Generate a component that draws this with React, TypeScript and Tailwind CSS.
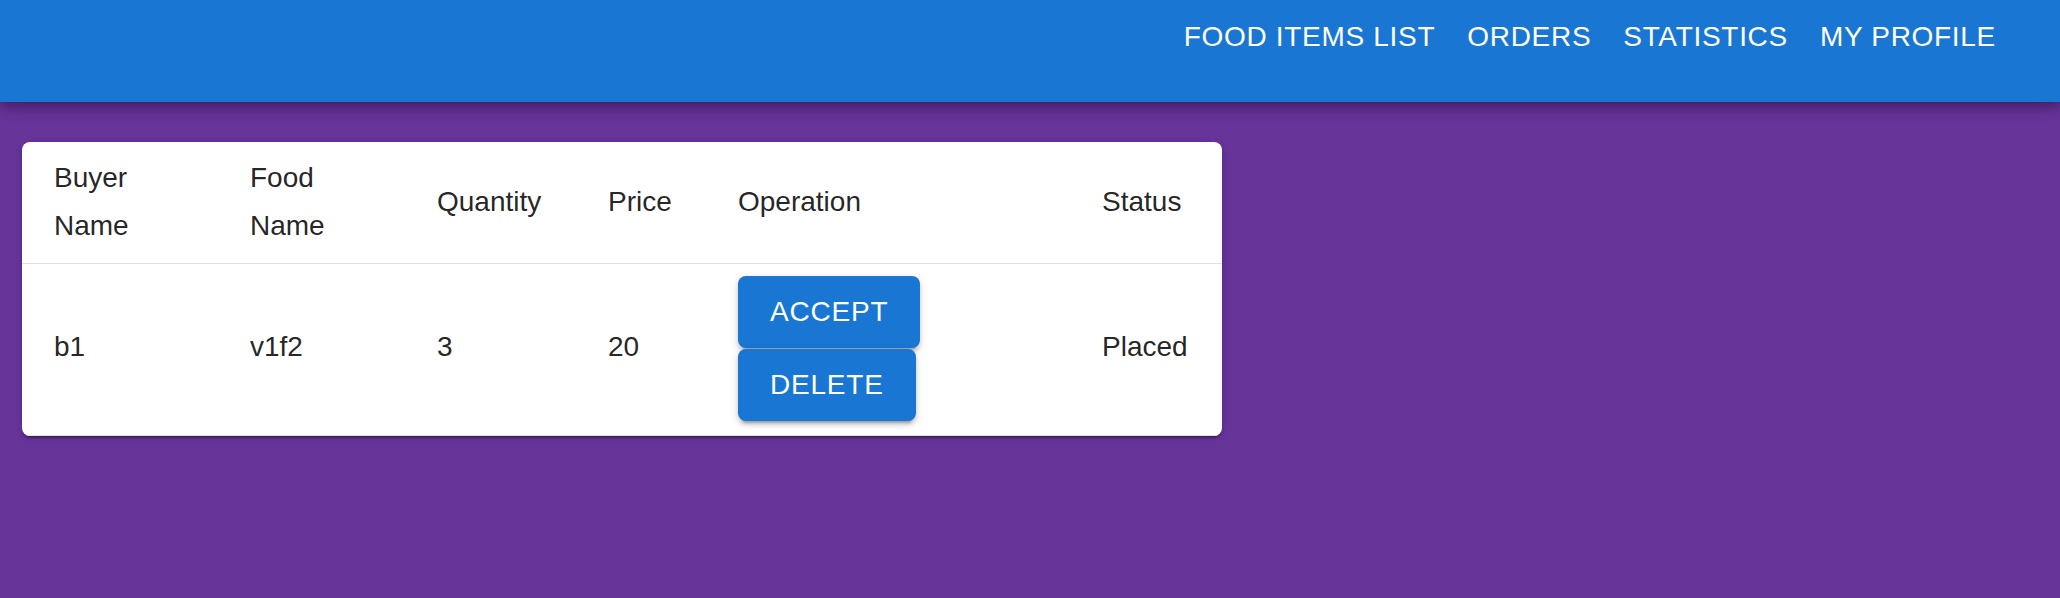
import React from "react";

const navItems = ["FOOD ITEMS LIST", "ORDERS", "STATISTICS", "MY PROFILE"];

export default function App() {
  return (
    <div className="min-h-screen w-full bg-[#663399] font-['Liberation_Sans',Arial,sans-serif]">
      <header className="relative z-10 h-[102px] w-full bg-[#1976d2] shadow-[0_4px_8px_-2px_rgba(0,0,0,0.2),0_8px_10px_0_rgba(0,0,0,0.14),0_2px_20px_0_rgba(0,0,0,0.12)]">
        <nav className="flex items-start justify-end pr-[48px]">
          {navItems.map((n) => (
            <button
              key={n}
              className="px-4 py-3 text-[28px] leading-[49px] tracking-[0.7px] text-white"
            >
              {n}
            </button>
          ))}
        </nav>
      </header>

      <div className="ml-[22px] mt-[40px] w-[1200px] overflow-hidden rounded-[8px] bg-white shadow-[0_4px_2px_-2px_rgba(0,0,0,0.2),0_2px_2px_0_rgba(0,0,0,0.14),0_2px_6px_0_rgba(0,0,0,0.12)]">
        <table className="w-full table-fixed border-collapse text-left text-[28px] leading-[48px] text-[rgba(0,0,0,0.87)]">
          <colgroup>
            <col className="w-[196px]" />
            <col className="w-[187px]" />
            <col className="w-[171px]" />
            <col className="w-[130px]" />
            <col className="w-[364px]" />
            <col className="w-[152px]" />
          </colgroup>
          <thead>
            <tr className="border-b border-[#e0e0e0]">
              <th className="px-[32px] pt-[12px] pb-[13px] align-middle font-normal">
                Buyer
                <br />
                Name
              </th>
              <th className="px-[32px] pt-[12px] pb-[13px] align-middle font-normal">
                Food
                <br />
                Name
              </th>
              <th className="px-[32px] pt-[12px] pb-[13px] align-middle font-normal">Quantity</th>
              <th className="px-[32px] pt-[12px] pb-[13px] align-middle font-normal">Price</th>
              <th className="px-[32px] pt-[12px] pb-[13px] align-middle font-normal">Operation</th>
              <th className="px-[32px] pt-[12px] pb-[13px] align-middle font-normal">Status</th>
            </tr>
          </thead>
          <tbody>
            <tr className="border-b border-[#e0e0e0]">
              <td className="px-[32px] pt-[10px] pb-[16px] align-middle">b1</td>
              <td className="px-[32px] pt-[10px] pb-[16px] align-middle">v1f2</td>
              <td className="px-[32px] pt-[10px] pb-[16px] align-middle">3</td>
              <td className="px-[32px] pt-[10px] pb-[16px] align-middle">20</td>
              <td className="px-[32px] pt-[12px] pb-[14px] align-middle">
                <div className="flex flex-col items-start">
                  <button className="rounded-[8px] bg-[#1976d2] px-[32px] py-[12px] text-[28px] leading-[48px] tracking-[0.8px] text-white shadow-[0_6px_2px_-4px_rgba(0,0,0,0.2),0_4px_4px_0_rgba(0,0,0,0.14),0_2px_10px_0_rgba(0,0,0,0.12)]">
                    ACCEPT
                  </button>
                  <button className="mt-[1px] rounded-[8px] bg-[#1976d2] px-[32px] py-[12px] text-[28px] leading-[48px] tracking-[0.8px] text-white shadow-[0_6px_2px_-4px_rgba(0,0,0,0.2),0_4px_4px_0_rgba(0,0,0,0.14),0_2px_10px_0_rgba(0,0,0,0.12)]">
                    DELETE
                  </button>
                </div>
              </td>
              <td className="px-[32px] pt-[10px] pb-[16px] align-middle">Placed</td>
            </tr>
          </tbody>
        </table>
      </div>
    </div>
  );
}
